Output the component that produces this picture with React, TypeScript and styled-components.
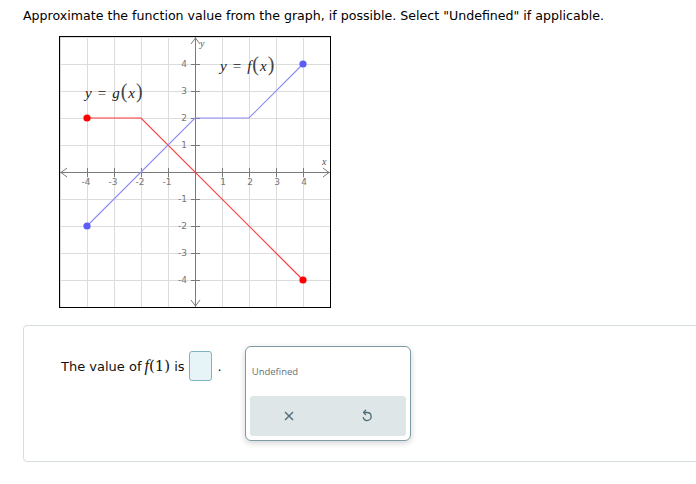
import styled, { createGlobalStyle } from "styled-components";

const UNIT = 27;
const HALF = 135;

const GlobalStyle = createGlobalStyle`
  body {
    margin: 0;
    background: #ffffff;
    font-family: "DejaVu Sans", Verdana, sans-serif;
    color: #000;
  }
`;

const Page = styled.div`
  width: 696px;
  height: 484px;
  overflow: hidden;
  padding: 8px 0 0 23px;
  box-sizing: border-box;
`;
const Prompt = styled.p`
  margin: 0;
  font-size: 12.6px;
  line-height: 16px;
  color: #000;
`;
const GraphFrame = styled.div`
  width: 270px;
  height: 270px;
  border: 1px solid #000;
  margin: 12px 0 0 36px;
  svg {
    display: block;
  }
`;
const Card = styled.div`
  margin-top: 17px;
  width: 700px;
  height: 137px;
  border: 1px solid #d6dddd;
  border-radius: 4px;
  box-sizing: border-box;
  padding: 20px 0 0 37px;
  display: flex;
  align-items: flex-start;
`;
const Sentence = styled.div`
  display: flex;
  align-items: center;
  height: 34px;
  margin-top: 3px;
  font-size: 13px;
  color: #111;
`;
const MathText = styled.span`
  font-family: "DejaVu Serif", "Liberation Serif", serif;
  font-size: 15px;
  margin: 0 4px 0 3px;
  i {
    font-family: "Liberation Serif", serif;
    font-size: 16px;
  }
`;
const AnswerBox = styled.div`
  width: 21px;
  height: 28px;
  margin-left: 4px;
  border: 1px solid #7fb3bf;
  border-radius: 3px;
  background: #e6f4f8;
`;
const Dot = styled.span`
  margin-left: 6px;
  font-size: 13px;
`;
const Popup = styled.div`
  margin-left: 23px;
  width: 166px;
  height: 95px;
  box-sizing: border-box;
  border: 1px solid #7e9ca3;
  border-radius: 6px;
  background: #fff;
  box-shadow: 0 2px 6px rgba(0, 0, 0, 0.18);
  padding: 4px 4px 4px 4px;
  display: flex;
  flex-direction: column;
`;
const Choice = styled.div`
  font-family: "Open Sans", "DejaVu Sans", sans-serif;
  font-size: 9.5px;
  color: #5f7379;
  padding: 14px 0 0 2px;
  height: 45px;
  box-sizing: border-box;
`;
const ToolBar = styled.div`
  flex: 1;
  background: #dfe6e8;
  border-radius: 3px;
  display: grid;
  grid-template-columns: 1fr 1fr;
  align-items: center;
  justify-items: center;
`;
const ToolButton = styled.button`
  border: none;
  background: transparent;
  padding: 0;
  width: 20px;
  height: 20px;
  display: flex;
  align-items: center;
  justify-content: center;
`;

const px = (x: number) => HALF + UNIT * x;
const py = (y: number) => HALF - UNIT * y;
const pts = (list: number[][]) =>
  list.map(([x, y]) => `${px(x)},${py(y)}`).join(" ");

function FnLabel({ x, y, name }: { x: number; y: number; name: string }) {
  return (
    <text x={x} y={y}>
      <tspan fontStyle="italic">y</tspan>
      <tspan dx={6}>=</tspan>
      <tspan dx={6} fontStyle="italic">
        {name}
      </tspan>
      <tspan dx={1} fontSize={20} fill="#444">
        (
      </tspan>
      <tspan dx={1} fontStyle="italic">
        x
      </tspan>
      <tspan dx={1} fontSize={20} fill="#444">
        )
      </tspan>
    </text>
  );
}

function Graph() {
  const ticks = [-4, -3, -2, -1, 1, 2, 3, 4];
  const grid = [-5, -4, -3, -2, -1, 1, 2, 3, 4, 5];
  const axis = "#7a7a7a";
  const label = "#777";
  return (
    <svg width={270} height={270} viewBox="0 0 270 270">
      {grid.map((g) => (
        <g key={g} stroke="#dcdcdc" strokeWidth={1}>
          <line x1={px(g) + 0.5} y1={0} x2={px(g) + 0.5} y2={270} />
          <line x1={0} y1={py(g) + 0.5} x2={270} y2={py(g) + 0.5} />
        </g>
      ))}
      <g stroke={axis} strokeWidth={1} fill="none">
        <line x1={0} y1={135.5} x2={270} y2={135.5} />
        <line x1={135.5} y1={0} x2={135.5} y2={270} />
        <polyline points="7,131 1,135.5 7,140" />
        <polyline points="263,131 269,135.5 263,140" />
        <polyline points="131,7 135.5,1 140,7" />
        <polyline points="131,263 135.5,269 140,263" />
        {ticks.map((t) => (
          <g key={t}>
            <line x1={px(t) + 0.5} y1={131} x2={px(t) + 0.5} y2={140} />
            <line x1={131} y1={py(t) + 0.5} x2={140} y2={py(t) + 0.5} />
          </g>
        ))}
      </g>
      <g
        fill={label}
        fontSize={9}
        fontFamily="'DejaVu Sans', sans-serif"
        textAnchor="middle"
      >
        {ticks.map((t) => (
          <text key={"x" + t} x={px(t) + (t < 0 ? -1 : 1)} y={148}>
            {t}
          </text>
        ))}
        {ticks.map((t) => (
          <text key={"y" + t} x={127} y={py(t) + 3} textAnchor="end">
            {t}
          </text>
        ))}
      </g>
      <g
        fill="#555"
        fontSize={10}
        fontStyle="italic"
        fontFamily="'Liberation Serif', serif"
      >
        <text x={262} y={128}>x</text>
        <text x={140} y={10}>y</text>
      </g>
      <polyline
        points={pts([
          [-4, 2],
          [-2, 2],
          [4, -4],
        ])}
        fill="none"
        stroke="#ff3b3b"
        strokeWidth={1.2}
      />
      <polyline
        points={pts([
          [-4, -2],
          [0, 2],
          [2, 2],
          [4, 4],
        ])}
        fill="none"
        stroke="#8d8df5"
        strokeWidth={1.2}
      />
      <circle cx={px(-4)} cy={py(2)} r={3.6} fill="#ff0000" />
      <circle cx={px(4)} cy={py(-4)} r={3.6} fill="#ff0000" />
      <circle cx={px(-4)} cy={py(-2)} r={3.6} fill="#5c5cf7" />
      <circle cx={px(4)} cy={py(4)} r={3.6} fill="#5c5cf7" />
      <g fill="#222" fontFamily="'Liberation Serif', serif" fontSize={15}>
        <FnLabel x={160} y={34} name="f" />
        <FnLabel x={25} y={61} name="g" />
      </g>
    </svg>
  );
}

function CloseIcon() {
  return (
    <svg width={12} height={12} viewBox="0 0 12 12">
      <path
        d="M2 2 L10 10 M10 2 L2 10"
        stroke="#4d6c76"
        strokeWidth={1.4}
        fill="none"
      />
    </svg>
  );
}

function UndoIcon() {
  return (
    <svg width={12} height={14} viewBox="0 0 12 14">
      <path
        d="M3 3.5 H6.2 A4 4 0 1 1 2.3 8.6"
        stroke="#4d6c76"
        strokeWidth={1.3}
        fill="none"
        strokeLinecap="round"
      />
      <path
        d="M4.6 1.2 L2.6 3.5 L4.6 5.6"
        stroke="#4d6c76"
        strokeWidth={1.3}
        fill="none"
        strokeLinecap="round"
        strokeLinejoin="round"
      />
    </svg>
  );
}

export default function App() {
  return (
    <Page>
      <GlobalStyle />
      <Prompt>
        Approximate the function value from the graph, if possible. Select
        "Undefined" if applicable.
      </Prompt>
      <GraphFrame>
        <Graph />
      </GraphFrame>
      <Card>
        <Sentence>
          The value of
          <MathText>
            <i>f</i>(1)
          </MathText>
          is
          <AnswerBox />
          <Dot>.</Dot>
        </Sentence>
        <Popup>
          <Choice>Undefined</Choice>
          <ToolBar>
            <ToolButton>
              <CloseIcon />
            </ToolButton>
            <ToolButton>
              <UndoIcon />
            </ToolButton>
          </ToolBar>
        </Popup>
      </Card>
    </Page>
  );
}
